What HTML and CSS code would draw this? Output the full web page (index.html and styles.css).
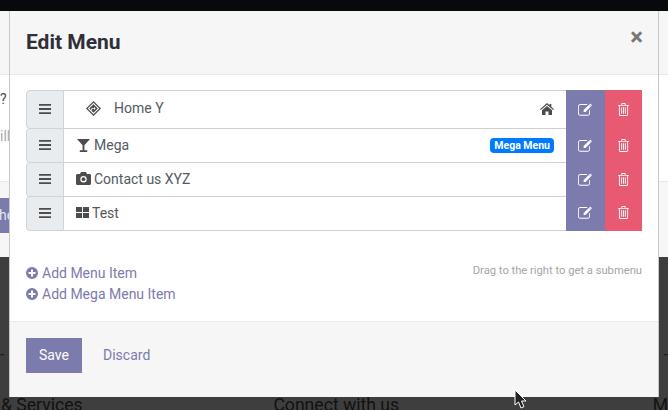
FILE: index.html
```html
<!DOCTYPE html>
<html lang="en">
<head>
<meta charset="utf-8">
<title>Edit Menu</title>
<link rel="stylesheet" href="styles.css">
</head>
<body>
<svg class="defs" width="0" height="0" aria-hidden="true">
  <symbol id="i-bars" viewBox="0 0 14 12"><path d="M1 1h12v1.800H1zM1 5.100h12v1.800H1zM1 9.200h12V11H1z"/></symbol>
  <symbol id="i-edit" viewBox="0 0 16 14"><path fill-rule="evenodd" d="M2.400 1.200h7.800l-.9.9H2.400c-.8 0-1.500.7-1.500 1.500v7.600c0 .8.700 1.500 1.500 1.500h8c.8 0 1.500-.7 1.500-1.500V8.100l.9-.9v4c0 1.400-1 2.400-2.400 2.400h-8C1 13.600 0 12.600 0 11.200V3.600C0 2.200 1 1.200 2.400 1.200z"/><path d="M6 7.600 11.800 1.800l2 2L8 9.600H6zM12.500 1.100c.3-.3.800-.3 1.100 0l.9.9c.3.300.3.800 0 1.100l-.4.400-2-2z"/></symbol>
  <symbol id="i-trash" viewBox="0 0 12 14"><path fill-rule="evenodd" d="M3.600 2V1.200C3.600.5 4.100 0 4.800 0h2.400c.7 0 1.200.5 1.200 1.200V2H12v1h-1v9.400c0 .9-.6 1.600-1.400 1.600H2.400C1.600 14 1 13.300 1 12.400V3H0V2zM4.600 2h2.800V1H4.600zM2 3v9.400c0 .4.200.6.400.6h7.200c.2 0 .4-.2.400-.6V3z"/><path d="M3.500 4.500h1V11.500h-1zM5.500 4.500h1V11.500h-1zM7.500 4.500h1V11.500h-1z"/></symbol>
  <symbol id="i-home" viewBox="0 0 14 12"><path d="M7 0 9.500 2.200V1h1.800v2.800L14 6.200l-.8.9L7 1.700.8 7.100 0 6.200z"/><path d="M7 3 12 7.300V12H8.500V8.500h-3V12H2V7.300z"/></symbol>
  <symbol id="i-sign" viewBox="0 0 14 14"><path fill-rule="evenodd" d="M7 0 14 7 7 14 0 7zM7 1.600 1.600 7 7 12.400 12.400 7z"/><path fill-rule="evenodd" d="M7 3 11 7 7 11 3 7zM5.700 8.800V7.300h1.800v1.100L9 6.900 7.500 5.400v1.100H5.600c-.4 0-.7.300-.7.700v1.600z"/></symbol>
  <symbol id="i-glass" viewBox="0 0 14 14"><path d="M0 0h14L8 6.600V12h3v2H3v-2h3V6.600z"/></symbol>
  <symbol id="i-camera" viewBox="0 0 15 13"><path fill-rule="evenodd" d="M5 0h5l1 2h2.500C14.300 2 15 2.700 15 3.500v8c0 .8-.7 1.500-1.500 1.500h-12C.7 13 0 12.300 0 11.500v-8C0 2.700.7 2 1.500 2H4zM7.500 4a3.200 3.200 0 1 0 0 6.400 3.200 3.200 0 0 0 0-6.400z"/><circle cx="7.500" cy="7.200" r="1.900"/></symbol>
  <symbol id="i-grid" viewBox="0 0 13 11"><path d="M0 0h6v5H0zM7 0h6v5H7zM0 6h6v5H0zM7 6h6v5H7z"/></symbol>
  <symbol id="i-plus" viewBox="0 0 12 12"><path fill-rule="evenodd" d="M6 0a6 6 0 1 1 0 12A6 6 0 0 1 6 0zM5 2.500v2.500H2.500v2H5v2.500h2V7h2.500V5H7V2.500z"/></symbol>
</svg>
<div class="page">
  <div class="topbar"></div>
  <div class="backdrop-page">
    <div class="bg-head"></div>
    <div class="bg-body">
      <span class="bg-q">?</span>
      <span class="bg-ill">ill</span>
    </div>
    <div class="bg-foot">
      <span class="bg-btn">he</span>
    </div>
    <div class="bg-dark">
      <span class="bg-dash">-</span>
      <div class="bg-footer-row"><span class="bg-svc">&amp; Services</span><span class="bg-conn">Connect with us</span><span class="bg-m">M</span></div>
      <span class="bg-dash bg-dash-r">-</span>
    </div>
  </div>

  <div class="modal">
    <header class="modal-head">
      <h1 class="modal-title">Edit Menu</h1>
      <span class="close">×</span>
    </header>
    <div class="modal-body">
      <div class="menu-list">
        <div class="menu-row row-first">
          <span class="handle"><svg class="ic ic-bars"><use href="#i-bars"/></svg></span>
          <div class="item item-first">
            <svg class="ic ic-sign"><use href="#i-sign"/></svg>
            <span class="label-first">Home Y</span>
            <svg class="ic ic-home"><use href="#i-home"/></svg>
          </div>
          <span class="act act-edit"><svg class="ic ic-edit"><use href="#i-edit"/></svg></span>
          <span class="act act-del"><svg class="ic ic-trash"><use href="#i-trash"/></svg></span>
        </div>
        <div class="menu-row">
          <span class="handle"><svg class="ic ic-bars"><use href="#i-bars"/></svg></span>
          <div class="item">
            <svg class="ic ic-glass"><use href="#i-glass"/></svg>
            <span>Mega</span>
            <span class="badge">Mega Menu</span>
          </div>
          <span class="act act-edit"><svg class="ic ic-edit"><use href="#i-edit"/></svg></span>
          <span class="act act-del"><svg class="ic ic-trash"><use href="#i-trash"/></svg></span>
        </div>
        <div class="menu-row">
          <span class="handle"><svg class="ic ic-bars"><use href="#i-bars"/></svg></span>
          <div class="item">
            <svg class="ic ic-camera"><use href="#i-camera"/></svg>
            <span>Contact us XYZ</span>
          </div>
          <span class="act act-edit"><svg class="ic ic-edit"><use href="#i-edit"/></svg></span>
          <span class="act act-del"><svg class="ic ic-trash"><use href="#i-trash"/></svg></span>
        </div>
        <div class="menu-row">
          <span class="handle"><svg class="ic ic-bars"><use href="#i-bars"/></svg></span>
          <div class="item">
            <svg class="ic ic-grid"><use href="#i-grid"/></svg>
            <span>Test</span>
          </div>
          <span class="act act-edit"><svg class="ic ic-edit"><use href="#i-edit"/></svg></span>
          <span class="act act-del"><svg class="ic ic-trash"><use href="#i-trash"/></svg></span>
        </div>
      </div>
      <div class="add-area">
        <div class="add-links">
          <a class="add-link"><svg class="ic ic-plus"><use href="#i-plus"/></svg>Add Menu Item</a>
          <a class="add-link"><svg class="ic ic-plus"><use href="#i-plus"/></svg>Add Mega Menu Item</a>
        </div>
        <span class="hint">Drag to the right to get a submenu</span>
      </div>
    </div>
    <footer class="modal-foot">
      <button class="btn-save">Save</button>
      <a class="btn-discard">Discard</a>
    </footer>
  </div>

  <svg class="cursor" viewBox="0 0 14 21" width="14" height="21"><path d="M1 1v15l3.500-3 2.500 6 3-1.300-2.500-5.700H12z" fill="#222" stroke="#fff" stroke-width="1"/></svg>
</div>
</body>
</html>
```
FILE: styles.css
```css
* { box-sizing: border-box; }
html, body { margin: 0; padding: 0; }
body { font-family: Roboto, "Liberation Sans", sans-serif; font-size: 14px; color: #4c4c4c; }
.defs { position: absolute; }
.page { position: relative; width: 668px; height: 410px; overflow: hidden; background: #3e3e3e; }
.topbar { height: 11px; background: #08090c; }
.backdrop-page { height: 399px; display: flex; flex-direction: column; }
.bg-head { height: 64px; flex: none; background: #f6f6f6; border-bottom: 1px solid #e8e8e8; }
.bg-body { height: 106px; flex: none; background: #fff; position: relative; color: #4c4c4c; }
.bg-q { position: absolute; left: 0; top: 16px; }
.bg-ill { position: absolute; left: 0; top: 53px; color: #aaa; }
.bg-foot { height: 76px; flex: none; background: #f6f6f6; border-top: 1px solid #e8e8e8; padding-top: 16px; }
.bg-btn { display: block; width: 10px; height: 35px; background: #7c7bad; color: #e6e6f0; line-height: 35px; text-indent: -1px; overflow: hidden; }
.bg-dark { flex: 1; position: relative; background: #3e3e3e; color: #111; font-size: 17.600px; }
.bg-dash { position: absolute; left: 0; top: 88px; color: #1c1c1c; font-size: 16px; line-height: 20px; }
.bg-dash-r { left: auto; right: 0; }
.bg-footer-row { position: absolute; top: 136px; left: 0; width: 668px; display: flex; line-height: 24px; white-space: nowrap; }
.bg-svc { margin-left: 1px; width: 273px; }
.bg-conn { width: 380px; }

.modal { position: absolute; left: 9px; top: 11px; width: 650px; height: 386px; display: flex; flex-direction: column; background: #fff; border-left: 1px solid #c8c8c8; border-right: 1px solid #c8c8c8; }
.modal-head { height: 64px; flex: none; display: flex; align-items: center; justify-content: space-between; padding: 0 16px; background: #f6f6f6; border-bottom: 1px solid #e9e9e9; }
.modal-title { margin: 0; font-size: 21px; font-weight: 700; color: #2f2f38; line-height: 24px; position: relative; top: -1px; }
.close { font-size: 24px; font-weight: 700; color: #777; line-height: 24px; position: relative; top: -6px; left: 1px; }
.modal-body { flex: 1; padding: 15px 16px 0; }
.menu-list { display: flex; flex-direction: column; }
.menu-row { display: flex; height: 35px; margin-top: -1px; }
.row-first { height: 39px; margin-top: 0; }
.handle { width: 38px; flex: none; display: flex; align-items: center; justify-content: center; background: #e9ecef; border: 1px solid #ced4da; border-radius: 4px 0 0 4px; }
.ic { fill: currentColor; flex: none; display: block; }
.ic-bars { width: 14px; height: 12px; color: #4c4c4c; position: relative; top: -1px; }
.item { flex: 1; display: flex; align-items: center; padding: 0 12px 2px 12px; border-top: 1px solid #d0d0d0; border-bottom: 1px solid #d0d0d0; color: #555a62; line-height: 20px; gap: 3px; }
.item-first { padding-left: 22px; padding-right: 12px; }
.label-first { margin-left: 10px; position: relative; top: -1px; }
.ic-sign { width: 15px; height: 15px; color: #4c4c4c; }
.ic-home { width: 14px; height: 12px; color: #4c4c4c; margin-left: auto; }
.ic-glass { width: 13px; height: 13px; color: #4c4c4c; margin-left: 1px; margin-right: 1px; position: relative; top: 1px; }
.ic-camera { width: 15px; height: 13px; color: #4c4c4c; }
.ic-grid { width: 13px; height: 11px; color: #4c4c4c; }
.badge { margin-left: auto; background: #007bff; color: #fff; font-size: 10.500px; font-weight: 700; line-height: 15px; padding: 0 4px; border-radius: 4px; position: relative; top: 1px; }
.act { flex: none; display: flex; align-items: center; justify-content: center; margin-top: -1px; margin-bottom: -1px; padding-bottom: 1px; }
.row-first .act { margin-top: 0; margin-bottom: 0; }
.menu-row:last-child .act { margin-bottom: 0; }
.act-edit { width: 39px; background: #7c7bad; color: #fff; }
.act-del { width: 37px; background: #e85a71; color: #fff; }
.ic-edit { width: 15px; height: 13px; }
.ic-trash { width: 11px; height: 13px; }
.add-area { display: flex; justify-content: space-between; align-items: flex-start; margin-top: 32px; }
.add-links { display: flex; flex-direction: column; gap: 1px; }
.add-link { display: flex; align-items: center; gap: 4px; color: #7c7bad; line-height: 20px; }
.ic-plus { width: 12px; height: 12px; }
.hint { font-size: 11.200px; line-height: 14px; color: #a5a5a5; margin-top: 1px; }
.modal-foot { height: 76px; flex: none; display: flex; align-items: flex-start; gap: 21px; padding: 16px 16px 0; background: #f6f6f6; border-top: 1px solid #e9e9e9; }
.btn-save { width: 56px; height: 35px; border: 0; padding: 0 0 2px; background: #7c7bad; color: #fff; font: 14px Roboto, sans-serif; }
.btn-discard { color: #7c7bad; line-height: 35px; }
.cursor { position: absolute; left: 514px; top: 389px; }
```
